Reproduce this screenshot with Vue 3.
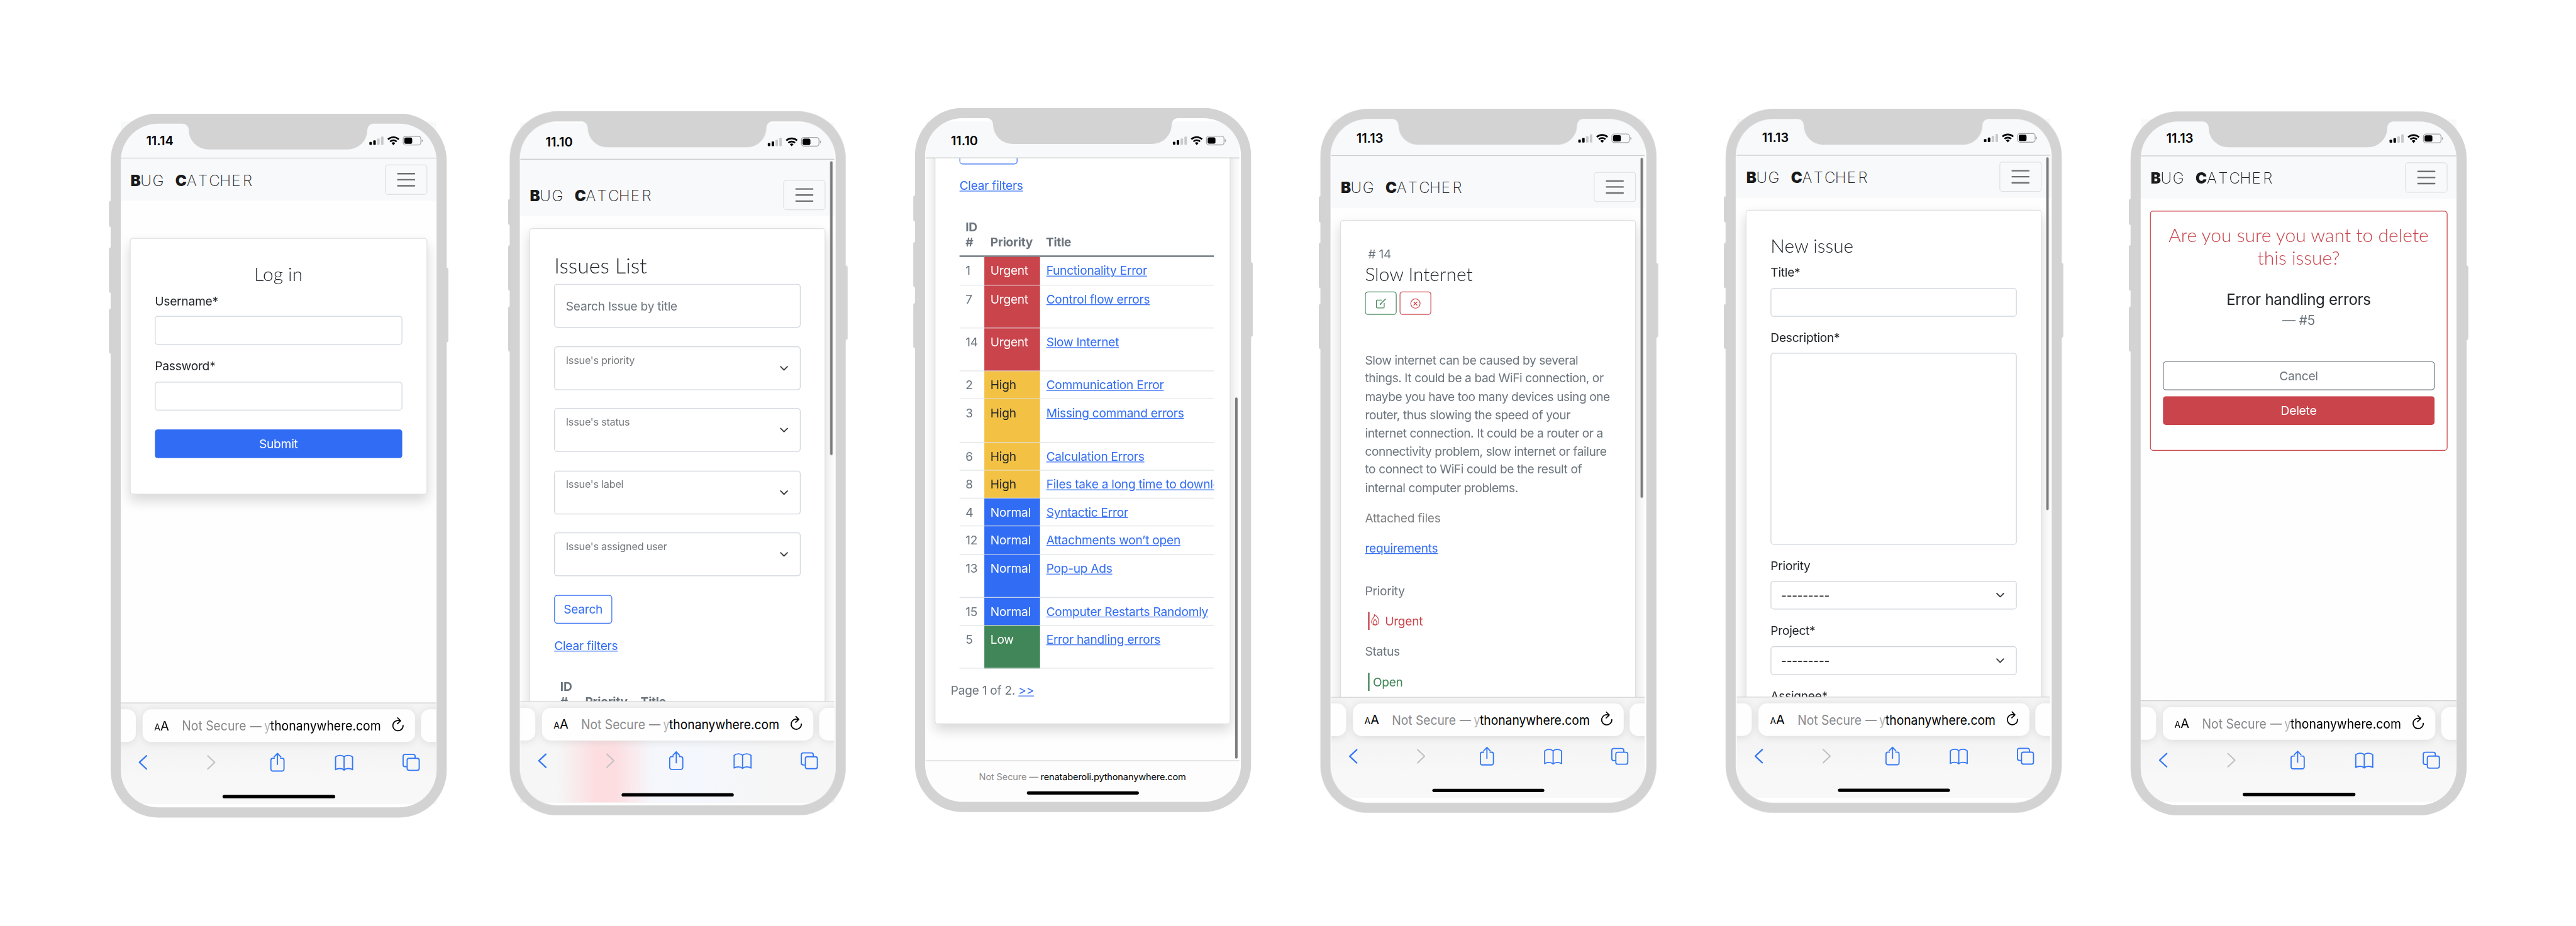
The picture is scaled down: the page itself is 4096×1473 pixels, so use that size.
<script setup>
const phones = [
  { kind: 'login', time: '11.14', left: 262, top: 269, sx: 24, sy: 19, scale: 1.992, shift: 0 },
  { kind: 'list', time: '11.10', left: 148.6, top: 264, sx: 25.2, sy: 27, scale: 1.983, shift: 18.6, bar: [46, 351] },
  { kind: 'table', time: '11.10', left: 164, top: 256, sx: 25.2, sy: 32, scale: 1.981, bar: [329.6, 432] },
  { kind: 'detail', time: '11.13', left: 164, top: 258, sx: 25.7, sy: 24.8, scale: 1.98, shift: 13.4, bar: [45.7, 407] },
  { kind: 'create', time: '11.13', left: 164, top: 258, sx: 26.2, sy: 23.7, scale: 1.981, shift: 0, bar: [45.7, 422] },
  { kind: 'remove', time: '11.13', left: 163.7, top: 264, sx: 24.6, sy: 18.8, scale: 1.992, shift: 0 },
]

const filters = ["Issue's priority", "Issue's status", "Issue's label", "Issue's assigned user"]

const issues = [
  { id: 1, priority: 'Urgent', title: 'Functionality Error' },
  { id: 7, priority: 'Urgent', title: 'Control flow errors', tall: true },
  { id: 14, priority: 'Urgent', title: 'Slow Internet', tall: true },
  { id: 2, priority: 'High', title: 'Communication Error' },
  { id: 3, priority: 'High', title: 'Missing command errors', tall: true },
  { id: 6, priority: 'High', title: 'Calculation Errors' },
  { id: 8, priority: 'High', title: 'Files take a long time to download' },
  { id: 4, priority: 'Normal', title: 'Syntactic Error' },
  { id: 12, priority: 'Normal', title: 'Attachments won’t open' },
  { id: 13, priority: 'Normal', title: 'Pop-up Ads', tall: true },
  { id: 15, priority: 'Normal', title: 'Computer Restarts Randomly' },
  { id: 5, priority: 'Low', title: 'Error handling errors', tall: true },
]

const description = [
  'Slow internet can be caused by several',
  'things. It could be a bad WiFi connection, or',
  'maybe you have too many devices using one',
  'router, thus slowing the speed of your',
  'internet connection. It could be a router or a',
  'connectivity problem, slow internet or failure',
  'to connect to WiFi could be the result of',
  'internal computer problems.',
]
</script>

<template>
  <main class="stage">
    <div class="board">
      <section
        v-for="(p, i) in phones"
        :key="i"
        class="phone"
        :style="{ marginLeft: p.left + 'px', marginTop: p.top + 'px' }"
      >
        <div
          class="screen"
          :class="'screen-' + p.kind"
          :style="{ transform: `translate(${p.sx}px, ${p.sy}px) scale(${p.scale})` }"
        >
          <header class="status">
            <span class="clock">{{ p.time }}</span>
            <svg class="signals" viewBox="0 0 66 14">
              <rect x="0.6" y="8.2" width="3" height="3.6" rx="0.8" />
              <rect x="5.2" y="6.3" width="3" height="5.5" rx="0.8" />
              <rect x="9.8" y="4.2" width="3" height="7.6" rx="0.8" fill="#c9cacc" />
              <rect x="14.4" y="1.9" width="3" height="9.9" rx="0.8" fill="#c9cacc" />
              <g fill="none" stroke="#000" stroke-width="2">
                <path d="M22.7 5.2a9.4 9.4 0 0 1 12.9 0" />
                <path d="M25.2 7.9a5.7 5.7 0 0 1 7.9 0" />
              </g>
              <path d="M29.15 12.1l-2.2-2.4a3.2 3.2 0 0 1 4.4 0z" />
              <rect x="40.8" y="1.5" width="21" height="10.4" rx="3" fill="none" stroke="#a5a6a8" stroke-width="1" />
              <rect x="42.2" y="2.9" width="9.3" height="7.6" rx="1.8" />
              <path d="M62.9 5v3.6q1.3-.5 1.3-1.8T62.9 5z" fill="#a5a6a8" />
            </svg>
          </header>

          <div class="viewport">
            <div class="page">
              <nav v-if="p.kind !== 'table'" class="navbar" :style="{ paddingTop: 8 + p.shift + 'px' }">
                <svg class="brand" width="170" height="40" viewBox="0 0 170 40">
                  <text y="28.1" x="0.8 13.9 29.9 50 60.1 75 90.1 104.6 118.6 134.4 149.2"><tspan class="heavy">B</tspan>UG <tspan class="heavy">C</tspan>ATCHER</text>
                </svg>
                <span class="toggler">
                  <svg viewBox="0 0 30 30" width="30" height="30">
                    <path d="M4 7h22M4 15h22M4 23h22" stroke="#000" stroke-opacity=".55" stroke-width="2" stroke-linecap="round" />
                  </svg>
                </span>
              </nav>

              <div v-if="p.kind === 'login'" class="card login">
                <h2 class="center">Log in</h2>
                <label>Username*</label>
                <div class="input"></div>
                <label>Password*</label>
                <div class="input"></div>
                <div class="btn primary">Submit</div>
              </div>

              <div v-else-if="p.kind === 'list'" class="card list">
                <h1>Issues List</h1>
                <div class="floating search"><span>Search Issue by title</span></div>
                <div v-for="f in filters" :key="f" class="floating">
                  <small>{{ f }}</small>
                  <svg class="chevron" viewBox="0 0 16 16"><path d="m2 5 6 6 6-6" /></svg>
                </div>
                <div class="btn outline-primary">Search</div>
                <p class="clear"><a>Clear filters</a></p>
                <table>
                  <thead>
                    <tr><th>ID #</th><th>Priority</th><th>Title</th></tr>
                  </thead>
                </table>
              </div>

              <div v-else-if="p.kind === 'table'" class="card scrolled">
                <div class="btn outline-primary"></div>
                <p class="clear"><a>Clear filters</a></p>
                <table>
                  <thead>
                    <tr><th>ID #</th><th>Priority</th><th>Title</th></tr>
                  </thead>
                  <tbody>
                    <tr v-for="row in issues" :key="row.id" :class="{ tall: row.tall }">
                      <td>{{ row.id }}</td>
                      <td :class="row.priority.toLowerCase()">{{ row.priority }}</td>
                      <td class="title"><a>{{ row.title }}</a></td>
                    </tr>
                  </tbody>
                </table>
                <p class="pager">Page 1 of 2. <a>&gt;&gt;</a></p>
              </div>

              <div v-else-if="p.kind === 'detail'" class="card detail">
                <span class="number"># 14</span>
                <h2>Slow Internet</h2>
                <div class="actions">
                  <span class="mini green">
                    <svg viewBox="0 0 14 14" width="14" height="14" fill="none" stroke="currentColor">
                      <path d="M8.2 2.4H2.1a1 1 0 0 0-1 1v8.4a1 1 0 0 0 1 1h8.4a1 1 0 0 0 1-1V6.2" stroke-width="1" />
                      <path d="M6.2 8 13.6.6" stroke-width="1.3" />
                      <path d="M6 8.3V6.9M6 8.2h1.5" stroke-width=".8" />
                    </svg>
                  </span>
                  <span class="mini red">
                    <svg viewBox="0 0 14 14" width="14" height="14" fill="none" stroke="currentColor" stroke-width="1">
                      <circle cx="7" cy="7" r="6.2" />
                      <path d="M4.6 4.6l4.8 4.8M9.4 4.6 4.6 9.4" stroke-width="1.1" />
                    </svg>
                  </span>
                </div>
                <p class="body"><span v-for="line in description" :key="line">{{ line }}</span></p>
                <p class="grey">Attached files</p>
                <p><a>requirements</a></p>
                <p class="gap">Priority</p>
                <p class="mark urgent-mark">
                  <svg viewBox="0 0 11 15" width="11" height="15" fill="none" stroke="currentColor" stroke-width="1">
                    <path d="M4.7.7C4.9 3 3.6 4.2 2.3 5.9 1.2 7.3.6 8.4.6 9.8c0 2.8 2 4.6 4.8 4.6s4.9-2 4.9-4.9C10.3 6.3 8.9 4.6 7.7 3.3 6.9 2.3 5.9 1.3 4.7.7z" />
                    <path d="M5.4 6.7C4.2 8.3 3.1 9.8 3.1 11.6c0 1.6.9 2.8 2.3 2.8s2.4-1.2 2.4-2.8c0-1.8-1.2-3.3-2.4-4.9z" />
                  </svg>
                  <span>Urgent</span>
                </p>
                <p>Status</p>
                <p class="mark open-mark"><span>Open</span></p>
              </div>

              <div v-else-if="p.kind === 'create'" class="card create">
                <h2>New issue</h2>
                <label>Title*</label>
                <div class="input"></div>
                <label>Description*</label>
                <div class="input area"></div>
                <label>Priority</label>
                <div class="input select">
                  <span>---------</span>
                  <svg class="chevron" viewBox="0 0 16 16"><path d="m2 5 6 6 6-6" /></svg>
                </div>
                <label>Project*</label>
                <div class="input select">
                  <span>---------</span>
                  <svg class="chevron" viewBox="0 0 16 16"><path d="m2 5 6 6 6-6" /></svg>
                </div>
                <label>Assignee*</label>
                <div class="input"></div>
              </div>

              <div v-else class="card remove">
                <h2>Are you sure you want to delete<br />this issue?</h2>
                <p class="quote">Error handling errors</p>
                <p class="cite">— #5</p>
                <div class="btn outline-secondary">Cancel</div>
                <div class="btn danger">Delete</div>
              </div>
            </div>
          </div>

          <footer v-if="p.kind === 'table'" class="compact">
            <span class="host"><i>Not Secure — </i>renataberoli.pythonanywhere.com</span>
            <span class="home"></span>
          </footer>

          <footer v-else class="safari">
            <div class="tabs">
              <span class="tab side-l"></span>
              <div class="tab current">
                <span class="aa"><small>A</small>A</span>
                <svg class="url" width="242" height="24" viewBox="0 0 242 24">
                  <g fill="#8a8a8d">
                    <text x="-0.3" y="17.4" textLength="76.5" lengthAdjust="spacingAndGlyphs">Not Secure</text>
                    <text x="80.8" y="17" textLength="13.5" lengthAdjust="spacingAndGlyphs">—</text>
                  </g>
                  <text y="17.4"><tspan x="97.6" fill="#b0b0b2" textLength="7.4" lengthAdjust="spacingAndGlyphs">y</tspan><tspan x="104.8" textLength="131.5" lengthAdjust="spacingAndGlyphs">thonanywhere.com</tspan></text>
                </svg>
                <svg class="reload" viewBox="0 0 15 18" fill="none" stroke="#000" stroke-width="1.3" stroke-linecap="round" stroke-linejoin="round">
                  <path d="M10 4.9A6.1 6.1 0 1 0 13.7 10.3" />
                  <path d="M7.2 1.3 10.7 4.8 6.9 8.3" />
                </svg>
              </div>
              <span class="tab side-r"></span>
            </div>
            <svg class="tools" viewBox="0 0 375 26" fill="none" stroke="#3478f6" stroke-width="1.4" stroke-linejoin="round">
              <path d="M30.6 5.3 22.2 13.2 30.6 21.1" stroke-width="1.7" stroke-linecap="round" />
              <path d="M103.4 5.3 111.7 13.2 103.4 21.1" stroke="#bfbfbf" stroke-width="1.5" stroke-linecap="round" />
              <path d="M183.1 8.3h-2.3a2.3 2.3 0 0 0-2.3 2.3v10.6a2.3 2.3 0 0 0 2.3 2.3h11a2.3 2.3 0 0 0 2.3-2.3V10.6a2.3 2.3 0 0 0-2.3-2.3h-2.3" />
              <path d="M186.3 15.7V3M182.4 6.6l3.9-4 3.9 4" stroke-linecap="round" />
              <path d="M265.5 6.7C263.3 4.3 258 4.3 255.4 6.9v15C258 20 263.3 20 265.5 22.4 267.7 20 273 20 275.6 21.9v-15C273 4.3 267.7 4.3 265.5 6.7zM265.5 6.7v15.5" />
              <path d="M340.5 18.3h-2.5a2.3 2.3 0 0 1-2.3-2.3V6.1a2.3 2.3 0 0 1 2.3-2.3h9.7a2.3 2.3 0 0 1 2.3 2.3v2.3" />
              <rect x="340.5" y="8.4" width="14.3" height="14.3" rx="2.3" />
            </svg>
            <span class="home"></span>
          </footer>

          <span v-if="p.bar" class="scrollbar" :style="{ top: p.bar[0] + 'px', height: p.bar[1] + 'px' }"></span>
        </div>

        <svg class="frame" viewBox="0 0 796 1668" fill="#d3d3d3">
          <path
            fill-rule="evenodd"
            d="M112 0H684A112 112 0 0 1 796 112V1556A112 112 0 0 1 684 1668H112A112 112 0 0 1 0 1556V112A112 112 0 0 1 112 0Z
               M112 24H171A14 15 0 0 1 185 39A46 46 0 0 0 231 85H562A46 46 0 0 0 608 39A14 15 0 0 1 622 24H684A88 88 0 0 1 772 112V1556A88 88 0 0 1 684 1644H112A88 88 0 0 1 24 1556V112A88 88 0 0 1 112 24Z"
          />
          <path d="M1 207a5 5 0 0 0-5 5v52a5 5 0 0 0 5 5zM1 317a5 5 0 0 0-5 5v98a5 5 0 0 0 5 5zM1 462a5 5 0 0 0-5 5v97a5 5 0 0 0 5 5zM795 365a5 5 0 0 1 5 5v167a5 5 0 0 1-5 5z" />
        </svg>
      </section>
    </div>
  </main>
</template>

<style>
html,
body {
  margin: 0;
  background: #fff;
}
</style>

<style scoped>
* {
  box-sizing: border-box;
}
.stage {
  width: 4096px;
  height: 1473px;
  overflow: hidden;
  background: #fff;
  font-family: Inter, 'Liberation Sans', sans-serif;
}
.board {
  display: flex;
  align-items: flex-start;
  width: 6101px;
  height: 2194px;
  transform: scale(0.67137);
  transform-origin: 0 0;
}
.phone {
  position: relative;
  flex: none;
  width: 796px;
  height: 1668px;
}
.frame {
  position: absolute;
  inset: 0;
  width: 796px;
  height: 1668px;
  overflow: visible;
}
.screen {
  position: absolute;
  left: 0;
  top: 0;
  width: 375px;
  height: 812px;
  display: flex;
  flex-direction: column;
  transform-origin: 0 0;
  background: #fefefe;
}

/* status bar */
.status {
  flex: none;
  display: flex;
  align-items: flex-start;
  justify-content: space-between;
  height: 43.8px;
  padding: 13.6px 13.8px 0 30.2px;
  background: #f8f9fb;
  border-bottom: 0.7px solid #c9cacc;
}
.clock {
  font-size: 15px;
  line-height: 18px;
  font-weight: 600;
  color: #000;
}
.signals {
  width: 66px;
  height: 14px;
  margin-top: 2px;
}

/* web page */
.viewport {
  flex: 1;
  min-height: 0;
  overflow: hidden;
}
.page {
  display: flow-root;
  width: 416.67px;
  transform: scale(0.9);
  transform-origin: 0 0;
  font-size: 16px;
  line-height: 24px;
  color: #6c757d;
  letter-spacing: -0.014em;
}
.navbar {
  display: flex;
  align-items: center;
  justify-content: space-between;
  padding: 8px 12px;
  background: #f8f9fb;
}
.brand {
  overflow: visible;
  font-size: 20.2px;
  font-weight: 200;
  fill: #1a1a1a;
  letter-spacing: 0;
}
.heavy {
  font-weight: 900;
}
.toggler {
  display: flex;
  align-items: center;
  justify-content: center;
  width: 56px;
  height: 40px;
  border: 1px solid #dfe0e2;
  border-radius: 4px;
}
.card {
  margin: 16px 12px 0;
  padding: 32px;
  border: 1px solid #dfdfdf;
  border-radius: 4px;
  background: #fff;
  box-shadow: 0 8px 16px rgba(0, 0, 0, 0.15);
}
h1,
h2,
p {
  margin: 0;
}
h1,
h2 {
  margin-bottom: 8px;
  font-family: Lato, Inter, sans-serif;
  font-weight: 300;
  line-height: 1.2;
  color: #212529;
  letter-spacing: 0;
  white-space: nowrap;
}
h1 {
  font-size: 28.25px;
}
h2 {
  font-size: 24.95px;
}
.center {
  text-align: center;
}
a {
  color: #316cf4;
  text-decoration: underline;
}
label {
  display: block;
  margin-bottom: 8px;
  line-height: 24.6px;
  color: #212529;
}
.input {
  display: flex;
  align-items: center;
  justify-content: space-between;
  height: 38px;
  margin-bottom: 16px;
  padding: 0 14.2px 0 13px;
  border: 1px solid #ced4da;
  border-radius: 4px;
  color: #212529;
}
.area {
  height: 254.7px;
}
.chevron {
  width: 12px;
  height: 12px;
  fill: none;
  stroke: #343a40;
  stroke-width: 2;
  stroke-linecap: round;
  stroke-linejoin: round;
}
.btn {
  display: flex;
  align-items: center;
  justify-content: center;
  height: 38px;
  border: 1px solid transparent;
  border-radius: 4px;
}
.primary {
  background: #316cf4;
  color: #fff;
}
.danger {
  background: #ca444b;
  color: #fff;
}
.outline-primary {
  width: 76.8px;
  border-color: #316cf4;
  color: #316cf4;
}
.outline-secondary {
  border-color: #6c757d;
}

.login {
  height: 339.5px;
  margin-top: 48.8px;
}
.login .btn {
  margin-top: 24.8px;
}

.list,
.scrolled {
  height: 900px;
}
.floating {
  display: flex;
  justify-content: space-between;
  align-items: center;
  height: 58px;
  margin-bottom: 24.5px;
  padding: 0 14.2px 0 14.5px;
  border: 1px solid #ced4da;
  border-radius: 4px;
}
.floating small {
  align-self: flex-start;
  margin-top: 4.6px;
  font-size: 13.6px;
  line-height: 24px;
  color: #75787b;
}
.clear {
  margin-top: 16.7px;
}
table {
  width: 337.7px;
  margin-top: 24.4px;
  border-collapse: separate;
  border-spacing: 0;
  table-layout: fixed;
  line-height: 20.2px;
}
th,
td {
  padding: 8px;
  text-align: left;
  vertical-align: bottom;
}
th {
  font-weight: 700;
  border-bottom: 2px solid #6c757d;
  white-space: normal;
}
th:first-child {
  width: 33.1px;
  padding-right: 0;
}
th:nth-child(2) {
  width: 73.6px;
}
td {
  height: 37.2px;
  border-bottom: 1px solid #dee2e6;
  vertical-align: top;
}
.tall td {
  height: 57.3px;
}
.title {
  overflow: hidden;
  padding-left: 8.6px;
  padding-right: 0;
  white-space: nowrap;
}
.urgent {
  background: #ca444b;
  color: #fff;
}
.high {
  background: #f3c244;
  color: #212529;
}
.normal {
  background: #316cf4;
  color: #fff;
}
.low {
  background: #418658;
  color: #fff;
}
.scrolled {
  margin-top: -40px;
  height: 791.5px;
  padding-top: 8.8px;
}
.scrolled table {
  margin-top: 24.6px;
}
.pager {
  margin: 16.5px 0 0 -11.6px;
}

.detail {
  height: 900px;
  white-space: nowrap;
}
.number {
  display: block;
  padding-left: 4.2px;
}
.actions {
  display: flex;
  gap: 4px;
}
.mini {
  display: flex;
  align-items: center;
  justify-content: center;
  width: 42.2px;
  height: 30.5px;
  border: 1px solid currentColor;
  border-radius: 4px;
}
.green,
.open-mark {
  color: #418658;
}
.red,
.urgent-mark {
  color: #ca444b;
}
.body {
  margin-top: 48.4px;
  line-height: 24.2px;
  letter-spacing: -0.022em;
}
.body span {
  display: block;
}
.detail p + p {
  margin-top: 16.3px;
}
.detail p.gap {
  margin-top: 32.4px;
}
.grey {
  color: #808080;
}
.mark {
  display: flex;
  height: 24px;
  margin-left: 4.2px;
  border-left: 2px solid currentColor;
}
.mark svg {
  margin: 2.8px 7.2px 0 2.2px;
}
.open-mark span {
  margin-left: 4.2px;
}

.create {
  height: 900px;
}

.remove {
  height: 317px;
  padding: 16px;
  border-color: #ca444b;
  box-shadow: none;
  text-align: center;
}
.remove h2 {
  color: #ca444b;
}
.quote {
  margin-top: 25px;
  font-size: 20px;
  line-height: 30px;
  color: #212529;
}
.cite {
  margin-bottom: 41.3px;
  font-size: 17.5px;
  line-height: 26px;
}
.remove .btn {
  margin-bottom: 8.2px;
}

/* browser chrome */
.safari {
  position: relative;
  flex: none;
  height: 120.8px;
  padding-top: 6.5px;
  overflow: hidden;
  background: linear-gradient(#f4f4f4, #f4f4f4 45%, #f8f8f8 75%);
  border-top: 0.8px solid #cfcfcf;
}
.screen-list .safari {
  background:
    linear-gradient(#f6f6f6 8%, rgba(246, 246, 246, 0) 50%),
    linear-gradient(90deg, rgba(253, 221, 224, 0) 12%, #fddde0 24%, #fddde0 30%, rgba(245, 247, 252, 0.9) 42%, #f4f7fd 55%, rgba(246, 246, 248, 0) 80%),
    #f6f6f6;
}
.tabs {
  display: flex;
  gap: 7.5px;
  height: 39.6px;
}
.tab {
  flex: none;
  background: #fefefe;
  border-radius: 10.5px;
  box-shadow: 0 1px 10px rgba(0, 0, 0, 0.11);
}
.side-l {
  width: 30px;
  margin-left: -12px;
}
.side-r {
  width: 30px;
}
.current {
  display: flex;
  align-items: center;
  width: 324.3px;
  padding-left: 14.3px;
  white-space: nowrap;
}
.aa {
  flex: none;
  width: 33.5px;
  font-size: 15px;
  color: #000;
}
.aa small {
  font-size: 10.5px;
}
.url {
  flex: none;
  width: 242px;
  height: 24px;
  margin-right: 7.2px;
  overflow: visible;
  font-size: 15.6px;
  fill: #000;
}
.reload {
  flex: none;
  width: 15px;
  height: 18px;
  margin-top: -2.5px;
}
.tools {
  display: block;
  width: 375px;
  height: 26px;
  margin-top: 10.6px;
}
.home {
  position: absolute;
  left: 120.6px;
  bottom: 6.7px;
  width: 134px;
  height: 4.7px;
  border-radius: 3px;
  background: #000;
}
.compact {
  position: relative;
  flex: none;
  height: 47.6px;
  padding-top: 11.2px;
  background: #fdfdfd;
  border-top: 0.8px solid #d4d4d4;
  text-align: center;
}
.host {
  display: block;
  font-size: 11px;
  line-height: 14px;
  letter-spacing: -0.13px;
  color: #000;
  white-space: nowrap;
}
.host i {
  font-style: normal;
  color: #8a8a8d;
}
.scrollbar {
  position: absolute;
  right: 2.5px;
  width: 2.7px;
  border-radius: 2px;
  background: #7b7b7b;
}
</style>
